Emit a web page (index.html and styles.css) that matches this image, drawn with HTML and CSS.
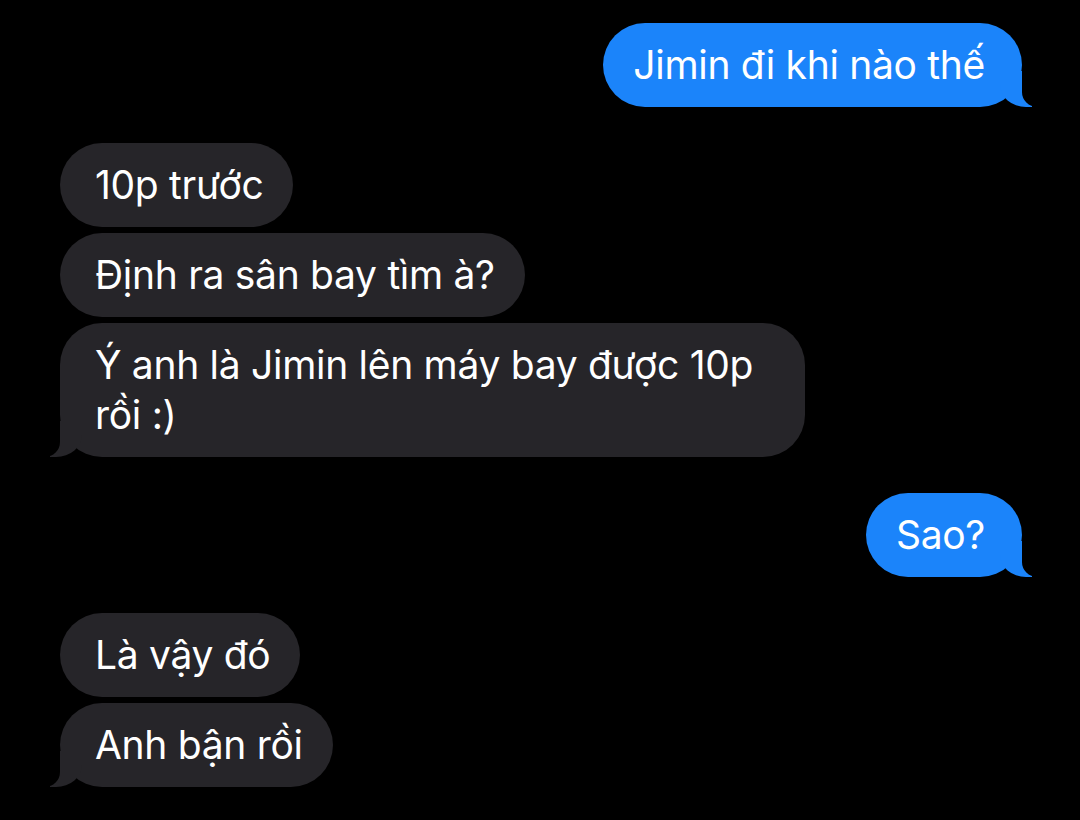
FILE: index.html
```html
<!DOCTYPE html>
<html lang="vi">
<head>
<meta charset="utf-8">
<title>Messages</title>
<link rel="stylesheet" href="styles.css">
</head>
<body>
<main class="thread">
  <div class="group sent">
    <div class="bubble tail">Jimin đi khi nào thế</div>
  </div>
  <div class="group received">
    <div class="bubble">10p trước</div>
    <div class="bubble">Định ra sân bay tìm à?</div>
    <div class="bubble tail">Ý anh là Jimin lên máy bay được 10p rồi :)</div>
  </div>
  <div class="group sent">
    <div class="bubble tail">Sao?</div>
  </div>
  <div class="group received">
    <div class="bubble">Là vậy đó</div>
    <div class="bubble tail">Anh bận rồi</div>
  </div>
</main>
</body>
</html>
```
FILE: styles.css
```css
html, body {
  margin: 0;
  background: #000;
}
body {
  width: 1080px;
  height: 820px;
  overflow: hidden;
  font-family: "Inter", "Roboto", "Noto Sans", sans-serif;
  color: #fff;
}
.thread {
  display: flex;
  flex-direction: column;
  gap: 36px;
  padding: 23px 58px 0 60px;
}
.group {
  display: flex;
  flex-direction: column;
  gap: 6px;
}
.group.sent { align-items: flex-end; }
.group.received { align-items: flex-start; }

.bubble {
  position: relative;
  box-sizing: border-box;
  font-size: 39px;
  letter-spacing: -0.3px;
  line-height: 50px;
  padding: 17px 30px 17px 35px;
  border-radius: 42px;
  background: #262529;
  max-width: 745px;
}
.sent .bubble {
  background: #1b84fa;
  padding: 17px 37px 17px 30px;
}

.bubble.tail::before,
.bubble.tail::after {
  content: "";
  position: absolute;
  bottom: 0;
  height: 36px;
}
.sent .bubble.tail::before {
  right: -10px;
  width: 32px;
  background: #1b84fa;
  border-bottom-left-radius: 26px 22px;
}
.sent .bubble.tail::after {
  right: -40px;
  width: 40px;
  background: #000;
  border-bottom-left-radius: 15px;
}
.received .bubble.tail::before {
  left: -10px;
  width: 32px;
  background: #262529;
  border-bottom-right-radius: 26px 22px;
}
.received .bubble.tail::after {
  left: -40px;
  width: 40px;
  background: #000;
  border-bottom-right-radius: 15px;
}
```
